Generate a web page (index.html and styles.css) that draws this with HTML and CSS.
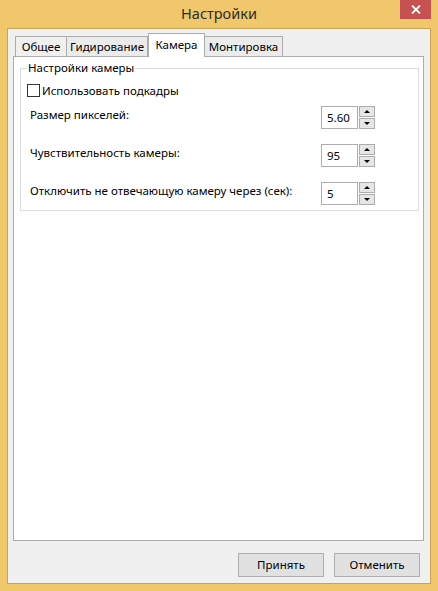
FILE: index.html
```html
<!DOCTYPE html>
<html lang="ru">
<head>
<meta charset="utf-8">
<title>Настройки</title>
<link rel="stylesheet" href="styles.css">
</head>
<body>
<div class="window">
  <div class="titlebar">
    <div class="title">Настройки</div>
    <div class="close">
      <svg width="10" height="9" viewBox="0 0 10 9"><path d="M1 0.5 L9 8.5 M9 0.5 L1 8.5" stroke="#fff" stroke-width="1.8" fill="none"/></svg>
    </div>
  </div>
  <div class="client">
    <div class="tabs">
      <div class="tab t1">Общее</div>
      <div class="tab t2">Гидирование</div>
      <div class="tab t3 active">Камера</div>
      <div class="tab t4">Монтировка</div>
    </div>
    <div class="pane">
      <fieldset class="group">
        <legend>Настройки камеры</legend>
        <div class="check-row">
          <span class="checkbox"></span>
          <span class="check-label">Использовать подкадры</span>
        </div>
        <div class="row">
          <span class="label">Размер пикселей:</span>
          <div class="spin">
            <div class="box">5.60</div>
            <div class="arrows">
              <div class="arrow"><span class="tri up"></span></div>
              <div class="arrow"><span class="tri down"></span></div>
            </div>
          </div>
        </div>
        <div class="row">
          <span class="label">Чувствительность камеры:</span>
          <div class="spin">
            <div class="box">95</div>
            <div class="arrows">
              <div class="arrow"><span class="tri up"></span></div>
              <div class="arrow"><span class="tri down"></span></div>
            </div>
          </div>
        </div>
        <div class="row">
          <span class="label">Отключить не отвечающую камеру через (сек):</span>
          <div class="spin">
            <div class="box">5</div>
            <div class="arrows">
              <div class="arrow"><span class="tri up"></span></div>
              <div class="arrow"><span class="tri down"></span></div>
            </div>
          </div>
        </div>
      </fieldset>
    </div>
    <div class="buttons">
      <div class="btn">Принять</div>
      <div class="btn">Отменить</div>
    </div>
  </div>
</div>
</body>
</html>
```
FILE: styles.css
```css
* { box-sizing: border-box; }
html, body { margin: 0; padding: 0; }
body {
  width: 438px;
  height: 591px;
  font-family: "Noto Sans", "Open Sans", sans-serif;
  font-size: 11.5px;
  color: #000;
  overflow: hidden;
}
.window {
  width: 438px;
  height: 591px;
  background: #F0C86B;
  padding: 0 7px 7px;
  display: flex;
  flex-direction: column;
}
.titlebar {
  height: 28px;
  flex-shrink: 0;
  display: grid;
  grid-template-columns: 1fr auto 1fr;
}
.title {
  grid-column: 2;
  font-size: 14.5px;
  line-height: 27px;
  color: #2b2b2b;
}
.close {
  grid-column: 3;
  justify-self: end;
  align-self: start;
  width: 31px;
  height: 19px;
  background: #C75050;
  display: flex;
  align-items: center;
  justify-content: center;
}
.close svg { display: block; }
.client {
  width: 424px;
  height: 556px;
  flex-shrink: 0;
  border: 1px solid #C9A456;
  background: #F0F0F0;
  padding: 4px 6px 6px 5px;
  display: flex;
  flex-direction: column;
}
.tabs {
  height: 23px;
  flex-shrink: 0;
  display: flex;
  align-items: flex-end;
  padding-left: 2px;
  position: relative;
  z-index: 1;
}
.tab {
  height: 20px;
  border: 1px solid #ACACAC;
  border-bottom: none;
  background: #F0F0F0;
  display: flex;
  align-items: center;
  justify-content: center;
  line-height: 16px;
  white-space: nowrap;
}
.t1 { width: 51px; border-right: none; }
.t2 { width: 82px; background: #EBEBEB; }
.t3 { width: 57px; }
.t4 { width: 78px; border-left: none; background: #EBEBEB; }
.tab.active {
  height: 24px;
  margin-bottom: -1px;
  background: #fff;
  padding-bottom: 2px;
}
.pane {
  height: 485px;
  flex-shrink: 0;
  border: 1px solid #ACACAC;
  background: #fff;
  padding: 0 4px 0 6px;
}
.group {
  margin: 3px 0 0 0;
  width: 399px;
  border: 1px solid #DCDCDC;
  padding: 0 6px 5px 6px;
  min-width: 0;
}
.group legend {
  padding: 0 1px;
  line-height: 16px;
  margin: 0;
}
.check-row {
  margin-top: 8px;
  height: 13px;
  display: flex;
  align-items: center;
}
.checkbox {
  width: 13px;
  height: 13px;
  border: 1px solid #333;
  background: #fff;
  flex-shrink: 0;
}
.check-label {
  margin-left: 2px;
  line-height: 16px;
}
.row {
  display: flex;
  align-items: flex-start;
  height: 23px;
  margin-top: 15px;
}
.check-row + .row { margin-top: 9px; }
.label {
  flex: 1;
  padding-left: 3px;
  padding-top: 1px;
  line-height: 16px;
  white-space: nowrap;
}
.spin {
  display: flex;
  gap: 1px;
  margin-right: 37px;
}
.box {
  width: 37px;
  height: 23px;
  border: 1px solid #ABADB3;
  padding-left: 5px;
  line-height: 21px;
  background: #fff;
}
.arrows {
  display: flex;
  flex-direction: column;
  justify-content: space-between;
  width: 16px;
  height: 23px;
}
.arrow {
  height: 11px;
  background: #E6E6E6;
  border: 1px solid #ACACAC;
  display: flex;
  align-items: center;
  justify-content: center;
}
.tri {
  width: 0;
  height: 0;
  border-left: 3px solid transparent;
  border-right: 3px solid transparent;
}
.tri.up { border-bottom: 3px solid #000; }
.tri.down { border-top: 3px solid #000; }
.buttons {
  display: flex;
  justify-content: flex-end;
  gap: 10px;
  margin-top: 12px;
  padding-right: 4px;
}
.btn {
  width: 86px;
  height: 24px;
  border: 1px solid #ADADAD;
  background: #E1E1E1;
  display: flex;
  align-items: center;
  justify-content: center;
  line-height: 16px;
}
```
